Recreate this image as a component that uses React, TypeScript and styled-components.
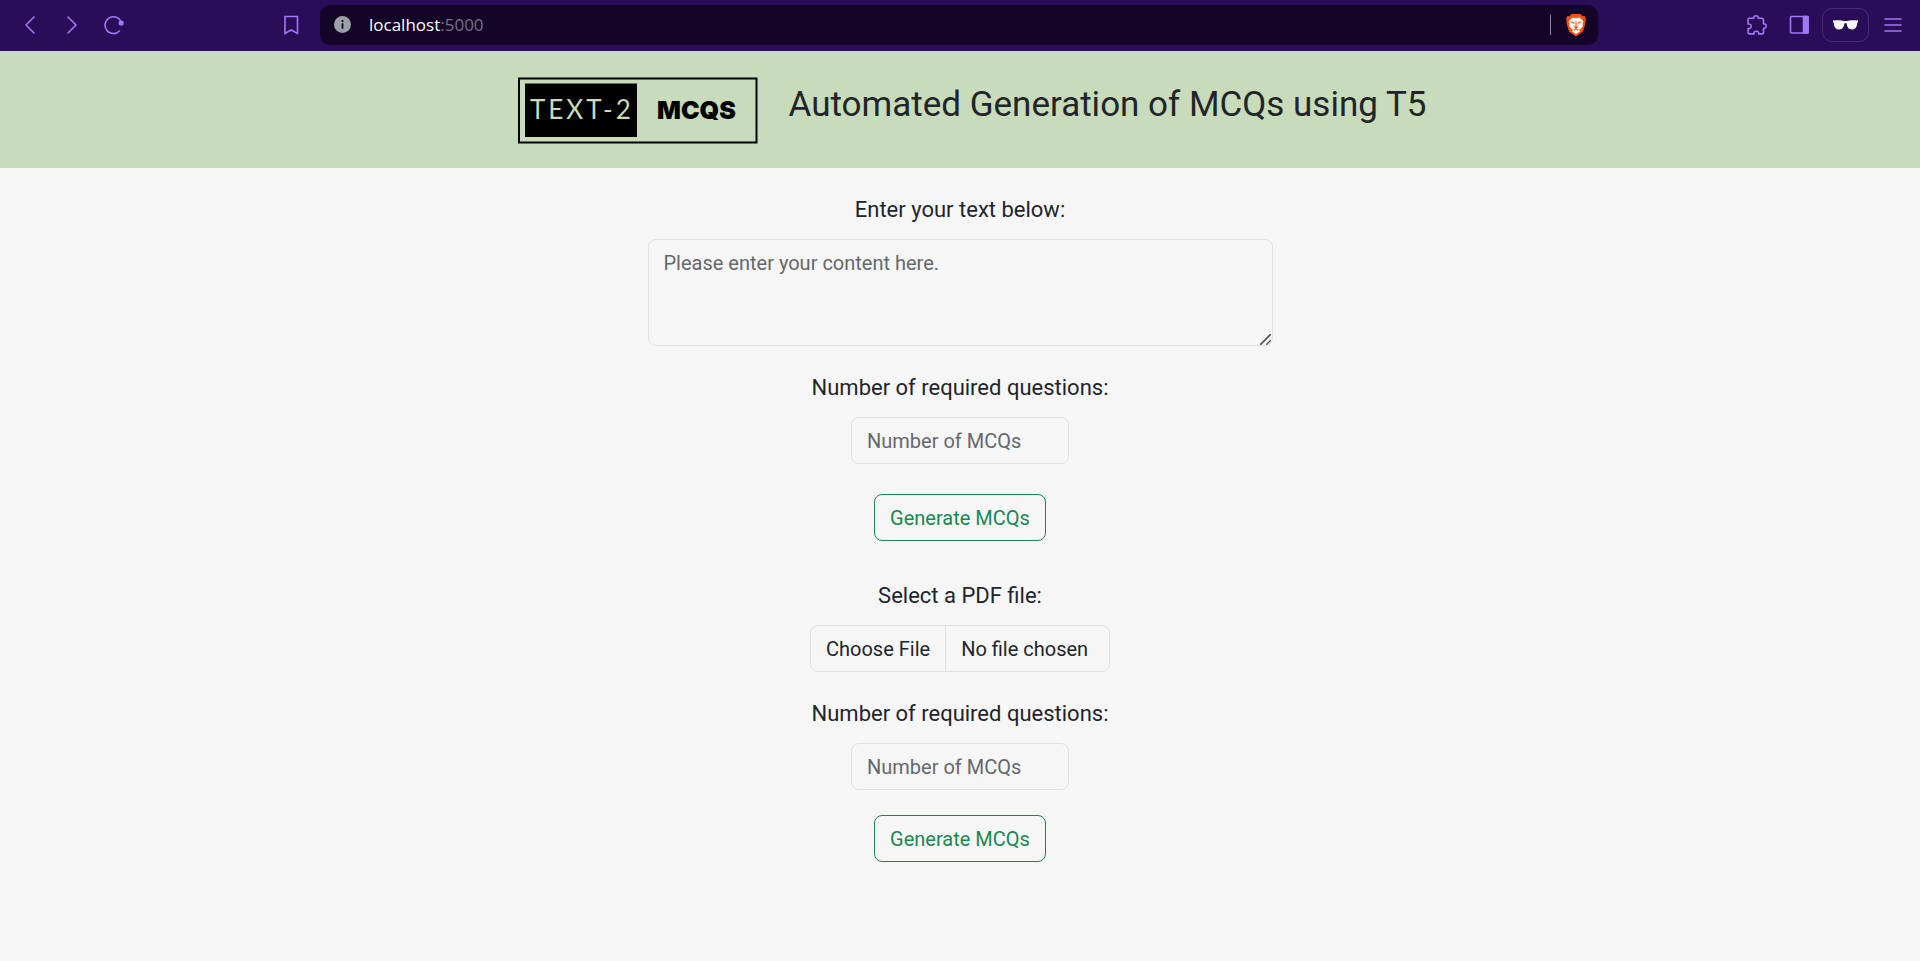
import React from "react";
import styled, { createGlobalStyle } from "styled-components";

const GlobalStyle = createGlobalStyle`
  *, *::before, *::after { box-sizing: border-box; }
  html { background: #f6f6f6; }
  body {
    margin: 0;
    background: #f6f6f6;
    color: #212529;
    font-family: Roboto, "Liberation Sans", sans-serif;
    font-size: 20px;
    line-height: 30px;
  }
`;

const Toolbar = styled.nav`
  display: flex;
  align-items: center;
  height: 51px;
  padding: 0 9px 2px 11px;
  background: #290d57;
  color: #9f78f8;
`;

const ToolGroup = styled.div`
  display: flex;
  align-items: center;
  gap: 5px;
`;

const IconButton = styled.button`
  display: flex;
  align-items: center;
  justify-content: center;
  width: 37px;
  height: 34px;
  padding: 0;
  border: 0;
  background: none;
  color: inherit;
`;

const PrivateButton = styled(IconButton)`
  width: 47px;
  border: 1px solid #4a2b80;
  border-radius: 10px;
  color: #f6f6f6;
`;

const AddressArea = styled.div`
  display: flex;
  align-items: center;
  gap: 11px;
  flex: 1;
  min-width: 0;
  margin: 0 140px;
`;

const AddressBar = styled.div`
  display: flex;
  align-items: center;
  flex: 1;
  height: 40px;
  padding: 0 11px 0 14px;
  border-radius: 10px;
  background: #140428;
`;

const AddressText = styled.a`
  flex: 1;
  margin-left: 18px;
  color: #77708a;
  font-family: "Open Sans", "Noto Sans", sans-serif;
  font-size: 17px;
  line-height: 24px;
  text-decoration: none;
`;

const Host = styled.span`
  color: #ffffff;
`;

const Divider = styled.span`
  width: 1px;
  height: 20px;
  margin-right: 14px;
  background: #8b8596;
`;

const Header = styled.header`
  display: flex;
  justify-content: center;
  gap: 31px;
  height: 117px;
  padding: 26px 16px 0 40px;
  background: #c8dcbb;
`;

const Title = styled.h1`
  margin: 7px 0 0;
  font-size: 35px;
  font-weight: 400;
  line-height: 42px;
`;

const Main = styled.main`
  display: flex;
  flex-direction: column;
  align-items: center;
  gap: 40px;
  padding: 27px 16px;
`;

const Form = styled.form<{ $gap: number }>`
  display: flex;
  flex-direction: column;
  align-items: center;
  gap: ${(p) => p.$gap}px;
  width: 100%;
`;

const Fields = styled.div`
  display: flex;
  flex-direction: column;
  align-items: center;
  gap: 27px;
  width: 100%;
`;

const Field = styled.div`
  display: flex;
  flex-direction: column;
  align-items: center;
  gap: 14px;
  width: 100%;
`;

const Label = styled.label`
  font-size: 22px;
  line-height: 30px;
`;

const Input = styled.input<{ $width: number }>`
  width: ${(p) => p.$width}px;
  max-width: 100%;
  height: 47px;
  padding: 8px 15px;
  border: 1px solid #dee2e6;
  border-radius: 8px;
  background: transparent;
  color: inherit;
  font: inherit;
  line-height: 29px;

  &::placeholder { color: #64686c; opacity: 1; }

  &::file-selector-button {
    margin: -8px 15px -8px -15px;
    padding: 9px 15px 7px;
    border: 0;
    border-right: 1px solid #dee2e6;
    background: transparent;
    color: inherit;
    font: inherit;
    line-height: 29px;
  }
`;

const TextArea = styled.textarea`
  display: block;
  width: 625px;
  max-width: 100%;
  height: 107px;
  padding: 8px 15px;
  border: 1px solid #dee2e6;
  border-radius: 8px;
  background: transparent;
  color: inherit;
  font: inherit;
  resize: vertical;

  &::placeholder { color: #64686c; opacity: 1; }

  &::-webkit-resizer {
    background:
      linear-gradient(135deg, transparent 44%, #555 46%, #555 54%, transparent 56%) 3px 4px / 11px 11px no-repeat,
      linear-gradient(135deg, transparent 38%, #555 42%, #555 58%, transparent 62%) 9px 10px / 5px 5px no-repeat;
  }
`;

const SubmitButton = styled.button`
  height: 47px;
  padding: 0 15px;
  border: 1px solid #198754;
  border-radius: 8px;
  background: transparent;
  color: #198754;
  font: inherit;
`;

const Logo = () => (
  <svg width="240" height="67" viewBox="0 0 240 67" role="img" aria-label="Text-2 MCQs">
    <rect x="1" y="1.5" width="237.500" height="64" fill="none" stroke="#000" strokeWidth="2" />
    <rect x="7" y="6.500" width="112" height="53.500" fill="#000" />
    <text x="12" y="42" fill="#c8dcbb" fontFamily="Lato, sans-serif" fontSize="26" letterSpacing="3">
      TEXT-2
    </text>
    <text x="139" y="42" fill="#000" fontFamily="Inter, sans-serif" fontSize="25" fontWeight="900">
      MCQS
    </text>
  </svg>
);

const stroke = {
  fill: "none",
  stroke: "currentColor",
  strokeWidth: 1.6,
  strokeLinecap: "round" as const,
  strokeLinejoin: "round" as const,
};

const BackIcon = () => (
  <svg width="20" height="20" viewBox="0 0 20 20" {...stroke}><path d="M14 2 6 10l8 8" /></svg>
);
const ForwardIcon = () => (
  <svg width="20" height="20" viewBox="0 0 20 20" {...stroke}><path d="m6 2 8 8-8 8" /></svg>
);
const ReloadIcon = () => (
  <svg width="20" height="20" viewBox="0 0 20 20" {...stroke}>
    <path d="M15.500 16A8.400 8.400 0 1 1 17 6.500" />
    <circle cx="17.200" cy="8" r="1.800" fill="currentColor" />
  </svg>
);
const BookmarkIcon = () => (
  <svg width="20" height="20" viewBox="0 0 20 20" {...stroke}>
    <path d="M4 1.500h12.500v17L10.200 15 4 18.500z" strokeLinejoin="miter" />
  </svg>
);
const InfoIcon = () => (
  <svg width="17" height="17" viewBox="0 0 17 17">
    <circle cx="8.500" cy="8.500" r="8.500" fill="#9aa0a6" />
    <path d="M7.600 7.300h1.800v5.500H7.600zM7.600 4h1.800v1.900H7.600z" fill="#140428" />
  </svg>
);
const LionIcon = () => (
  <svg width="22" height="24" viewBox="0 0 22 24">
    <path d="M6.500 1h9l2 2.200 2-.2 1.500 3-.8 2 .3 2-2.500 8.500L11 23.500 4 18.500 1.500 10l.3-2L1 6l1.500-3 2 .2z" fill="#fb4f0d" />
    <path d="M11 5.200 14.500 4.500l3.800 3.700-.8 2.800.4 2-2.700 3.200-1.200.3.800 2L11 21l-3.800-2.500.8-2-1.200-.3L4.100 13l.4-2-.8-2.800L7.500 4.500z" fill="#fff" />
    <path d="m5.500 9 3 .5.700 1.300M16.500 9l-3 .5-.7 1.300M11 8.500v6.200M8.800 13.500l2.200 1.400 2.200-1.400M8.800 17.200 11 16l2.200 1.200" fill="none" stroke="#fb4f0d" strokeWidth="1.100" />
  </svg>
);
const PuzzleIcon = () => (
  <svg width="20" height="20" viewBox="0 0 20 20" {...stroke}>
    <path d="M2 3.200h4.800C6.500 1.500 7.700.8 9 .8s2.600.8 2.200 2.400h3.600c1 0 1.700.7 1.700 1.700v4c1.700-.3 2.700.8 2.700 2.200s-1 2.500-2.700 2.200v3.900c0 1-.7 1.700-1.700 1.700h-3.200c.4-1.700-.7-2.700-2.200-2.700S6.600 17.200 7 18.900H2.800c-1 0-1.700-.7-1.700-1.700v-3.600c1.700.3 3-.8 3-2.300S2.800 8.700 1.100 9V4.100c0-.5.400-.9.900-.9Z" />
  </svg>
);
const SidebarIcon = () => (
  <svg width="20" height="20" viewBox="0 0 20 20" {...stroke}>
    <rect x="1.500" y="1.500" width="17.500" height="16.500" rx="1" />
    <path d="M14.500 1.500H19V18h-4.500z" fill="currentColor" />
  </svg>
);
const GlassesIcon = () => (
  <svg width="25" height="10" viewBox="0 0 25 10" fill="currentColor">
    <path d="M0 .5C4 0 8.500 0 11 1h3c2.500-1 7-1 11-.5v1.800l-.8.700C24 7 22.500 9.500 19 9.500c-3.600 0-5-2.500-5.400-6.200h-2.200C11 7 9.600 9.500 6 9.500 2.500 9.500 1 7 .8 3L0 2.300z" />
  </svg>
);
const MenuIcon = () => (
  <svg width="18" height="14" viewBox="0 0 18 14" {...stroke}>
    <path d="M1 1h16M1 7h16M1 13h16" />
  </svg>
);

export default function App() {
  return (
    <>
      <GlobalStyle />
      <Toolbar aria-label="Browser">
        <ToolGroup>
          <IconButton aria-label="Back"><BackIcon /></IconButton>
          <IconButton aria-label="Forward"><ForwardIcon /></IconButton>
          <IconButton aria-label="Reload"><ReloadIcon /></IconButton>
        </ToolGroup>
        <AddressArea>
          <IconButton aria-label="Bookmark"><BookmarkIcon /></IconButton>
          <AddressBar>
            <InfoIcon />
            <AddressText href="#"><Host>localhost</Host>:5000</AddressText>
            <Divider />
            <LionIcon />
          </AddressBar>
        </AddressArea>
        <ToolGroup>
          <IconButton aria-label="Extensions"><PuzzleIcon /></IconButton>
          <IconButton aria-label="Sidebar"><SidebarIcon /></IconButton>
          <PrivateButton aria-label="Private window"><GlassesIcon /></PrivateButton>
          <IconButton aria-label="Menu"><MenuIcon /></IconButton>
        </ToolGroup>
      </Toolbar>
      <Header>
        <Logo />
        <Title>Automated Generation of MCQs using T5</Title>
      </Header>
      <Main>
        <Form $gap={30}>
          <Fields>
            <Field>
              <Label htmlFor="content">Enter your text below:</Label>
              <TextArea id="content" placeholder="Please enter your content here." />
            </Field>
            <Field>
              <Label htmlFor="text-count">Number of required questions:</Label>
              <Input id="text-count" type="number" $width={218} placeholder="Number of MCQs" />
            </Field>
          </Fields>
          <SubmitButton type="button">Generate MCQs</SubmitButton>
        </Form>
        <Form $gap={25}>
          <Fields>
            <Field>
              <Label htmlFor="pdf">Select a PDF file:</Label>
              <Input id="pdf" type="file" accept="application/pdf" $width={300} />
            </Field>
            <Field>
              <Label htmlFor="pdf-count">Number of required questions:</Label>
              <Input id="pdf-count" type="number" $width={218} placeholder="Number of MCQs" />
            </Field>
          </Fields>
          <SubmitButton type="button">Generate MCQs</SubmitButton>
        </Form>
      </Main>
    </>
  );
}
